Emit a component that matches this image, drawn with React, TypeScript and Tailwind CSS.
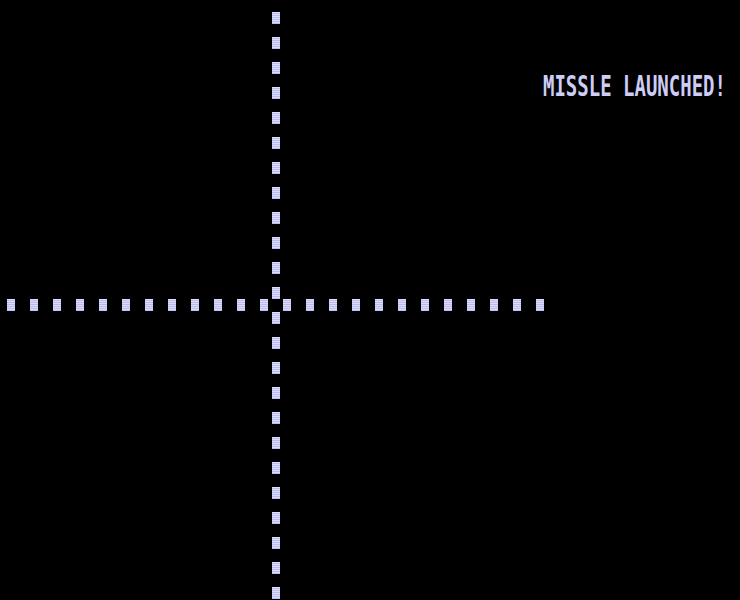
const VERT_DOTS = Array.from({ length: 24 });
const HORIZ_DOTS = Array.from({ length: 24 });

// one phosphor blip of the crosshair, with faint scanlines
function Dot() {
  return (
    <div className="w-2 h-3 bg-[repeating-linear-gradient(to_bottom,#dcdcff_0px,#dcdcff_1px,#bdbdec_1px,#bdbdec_2px)]" />
  );
}

export default function App() {
  return (
    <div className="relative w-[740px] h-[600px] bg-black overflow-hidden">
      {/* vertical axis */}
      <div className="absolute left-[272px] top-[12px] flex flex-col gap-[13px]">
        {VERT_DOTS.map((_, i) => (
          <Dot key={i} />
        ))}
      </div>

      {/* horizontal axis */}
      <div className="absolute left-[7px] top-[299px] flex gap-[15px]">
        {HORIZ_DOTS.map((_, i) => (
          <Dot key={i} />
        ))}
      </div>

      {/* status message */}
      <div className="absolute right-[14px] top-[72px] origin-top scale-y-[1.5] text-[19px] leading-none font-bold whitespace-pre font-['DejaVu_Sans_Mono',monospace] text-[#cdcdf5]">
        MISSLE LAUNCHED!
      </div>
    </div>
  );
}
